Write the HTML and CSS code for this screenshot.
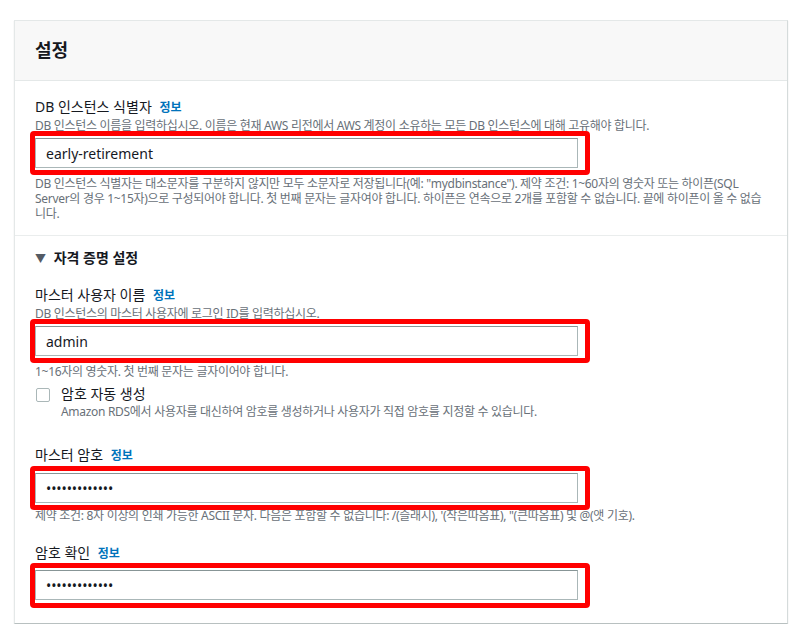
FILE: index.html
```html
<!DOCTYPE html>
<html lang="ko">
<head>
    <meta charset="UTF-8">
    <title>설정</title>
    <link rel="stylesheet" href="styles.css">
</head>
<body>

    <div class="panel">
        <div class="panel-header">
            <h2>설정</h2>
        </div>

        <div class="section">
            <div class="label">DB 인스턴스 식별자 <a class="info">정보</a></div>
            <div class="desc">DB 인스턴스 이름을 입력하십시오. 이름은 현재 AWS 리전에서 AWS 계정이 소유하는 모든 DB 인스턴스에 대해 고유해야 합니다.</div>
            <div class="mark">
                <input class="field" type="text" value="early-retirement" readonly>
            </div>
            <div class="hint">DB 인스턴스 식별자는 대소문자를 구분하지 않지만 모두 소문자로 저장됩니다(예: "mydbinstance"). 제약 조건: 1~60자의 영숫자 또는 하이픈(SQL Server의 경우 1~15자)으로 구성되어야 합니다. 첫 번째 문자는 글자여야 합니다. 하이픈은 연속으로 2개를 포함할 수 없습니다. 끝에 하이픈이 올 수 없습니다.</div>
        </div>

        <div class="section last">
            <div class="expander"><span class="caret">▼</span> 자격 증명 설정</div>

            <div class="label user">마스터 사용자 이름 <a class="info">정보</a></div>
            <div class="desc">DB 인스턴스의 마스터 사용자에 로그인 ID를 입력하십시오.</div>
            <div class="mark">
                <input class="field" type="text" value="admin" readonly>
            </div>
            <div class="hint">1~16자의 영숫자. 첫 번째 문자는 글자이어야 합니다.</div>

            <div class="check">
                <span class="box"></span>
                <div>
                    <div class="check-label">암호 자동 생성</div>
                    <div class="check-desc">Amazon RDS에서 사용자를 대신하여 암호를 생성하거나 사용자가 직접 암호를 지정할 수 있습니다.</div>
                </div>
            </div>

            <div class="label pw">마스터 암호 <a class="info">정보</a></div>
            <div class="mark no-desc">
                <input class="field" type="password" value="abcdefghijklm" readonly>
            </div>
            <div class="hint under">제약 조건: 8자 이상의 인쇄 가능한 ASCII 문자. 다음은 포함할 수 없습니다: /(슬래시), '(작은따옴표), "(큰따옴표) 및 @(앳 기호).</div>

            <div class="label confirm">암호 확인 <a class="info">정보</a></div>
            <div class="mark no-desc last-mark">
                <input class="field" type="password" value="abcdefghijklm" readonly>
            </div>
        </div>
    </div>

</body>
</html>
```

FILE: styles.css
```css
body {
    margin: 0;
    background-color: #fff;
    font-family: "Noto Sans", "Noto Sans CJK KR", sans-serif;
    color: #16191f;
}
.panel {
    margin: 20px 0 0 14px;
    width: 772px;
    border: 1px solid #e4e8e8;
    border-right-color: #d5dbdb;
    border-bottom-color: #b8c0c0;
    box-shadow: 0 1px 1px rgba(0, 28, 36, 0.15);
    background-color: #fff;
}
.panel-header {
    height: 59px;
    background-color: #f8f8f8;
    border-bottom: 1px solid #e4e8e8;
    display: flex;
    align-items: center;
    padding-left: 20px;
}
.panel-header h2 {
    margin: 0 0 3px 0;
    font-size: 18px;
    font-weight: 700;
}
.section {
    padding: 16px 20px 14px 20px;
    border-bottom: 1px solid #eaeded;
}
.section.last {
    border-bottom: none;
    padding-top: 12px;
    padding-bottom: 15px;
}
.label {
    font-size: 14px;
    line-height: 20px;
    font-weight: 400;
}
.info {
    color: #0073bb;
    font-size: 12px;
    font-weight: 700;
    margin-left: 4px;
}
.desc {
    font-size: 12px;
    line-height: 16px;
    letter-spacing: -0.3px;
    color: #687078;
}
.mark {
    position: relative; /* liegt ueber dem Hinweistext */
    z-index: 1;
    width: 550px;
    margin: -3px 0 0 -5px;
    border: 5px solid #ff0000;
    border-radius: 4px;
    padding: 2px 0;
}
.mark.no-desc {
    margin-top: 0;
}
.mark.last-mark {
    margin-top: -1px;
    padding-bottom: 3px;
}
.field {
    display: block;
    box-sizing: border-box;
    width: 543px;
    height: 30px;
    margin: 0;
    padding: 0 10px;
    border: 1px solid #aab7b8;
    border-top-color: #879596;
    border-radius: 0;
    font-family: inherit;
    font-size: 14px;
    color: #16191f;
    background: #fff;
    outline: none;
}
.field[type="password"] {
    font-size: 14px;
    letter-spacing: -0.1px;
}
.hint {
    font-size: 12px;
    line-height: 15px;
    letter-spacing: -0.3px;
    color: #687078;
    padding-top: 1px;
}
.hint.under {
    margin-top: -3px;
}
.expander {
    font-size: 14px;
    line-height: 20px;
    font-weight: 700;
    color: #16191f;
}
.caret {
    font-size: 11px;
    margin-right: 4px;
    color: #545b64;
}
.label.user {
    margin-top: 16px;
}
.check {
    display: flex;
    gap: 11px;
    margin-top: 5px;
}
.box {
    width: 12px;
    height: 12px;
    margin: 4px 0 0 1px;
    border: 1px solid #aab7b8;
    border-radius: 2px;
    flex-shrink: 0;
}
.check-label {
    font-size: 14px;
    line-height: 20px;
}
.check-desc {
    font-size: 12px;
    line-height: 15px;
    letter-spacing: -0.3px;
    color: #687078;
}
.label.pw {
    margin-top: 26px;
}
.label.confirm {
    margin-top: 20px;
}
```
